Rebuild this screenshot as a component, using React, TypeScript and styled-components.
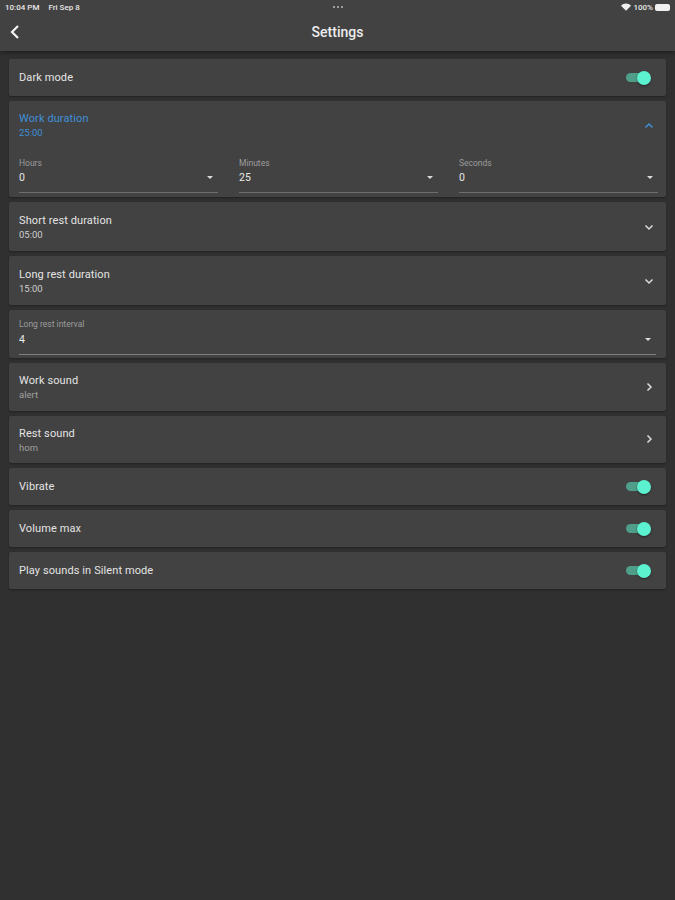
import styled, { createGlobalStyle } from 'styled-components';

const GlobalStyle = createGlobalStyle`
  html, body {
    margin: 0;
    padding: 0;
    background: #303030;
  }
  body {
    font-family: Roboto, "Liberation Sans", sans-serif;
    color: #fff;
  }
  * {
    box-sizing: border-box;
  }
`;

const Chevron = ({ dir, color = '#dcdcdc' }: { dir: 'up' | 'down' | 'right'; color?: string }) => {
  const points = {
    right: '9,5 16,12 9,19',
    up: '5,15 12,8 19,15',
    down: '5,9 12,16 19,9',
  }[dir];
  return (
    <svg width='12' height='12' viewBox='0 0 24 24' fill='none'>
      <polyline points={points} stroke={color} strokeWidth='3' />
    </svg>
  );
};

const Toggle = () => (
  <ToggleTrack>
    <ToggleThumb />
  </ToggleTrack>
);

const Select = ({ label, value, wide }: { label: string; value: string; wide?: boolean }) => (
  <div>
    <SelectLabel>{label}</SelectLabel>
    <SelectRow $wide={wide}>
      <SelectValue>{value}</SelectValue>
      <Caret />
    </SelectRow>
  </div>
);

const App = () => (
  <Page>
    <GlobalStyle />
    <Header>
      <StatusBar>
        <StatusGroup>
          <span>10:04 PM</span>
          <span>Fri Sep 8</span>
        </StatusGroup>
        <Dots>
          <i />
          <i />
          <i />
        </Dots>
        <StatusRight>
          <svg width='10' height='8' viewBox='0 0 22 16'>
            <path d='M11 16 0 5c6-6.500 16-6.500 22 0z' fill='#f0f0f0' />
          </svg>
          <span>100%</span>
          <Battery />
        </StatusRight>
      </StatusBar>
      <NavBar>
        <BackIcon>
          <svg width='14' height='16' viewBox='0 0 14 16' fill='none'>
            <polyline points='10,2 4,8 10,14' stroke='#f4f4f4' strokeWidth='2.2' />
          </svg>
        </BackIcon>
        <Title>Settings</Title>
      </NavBar>
    </Header>

    <List>
      <SwitchCard>
        <RowTitle>Dark mode</RowTitle>
        <Toggle />
      </SwitchCard>

      <ExpandedCard>
        <ExpandedHead>
          <div>
            <RowTitle $accent>Work duration</RowTitle>
            <RowSub $accent>25:00</RowSub>
          </div>
          <Chevron dir='up' color='#3f8fd8' />
        </ExpandedHead>
        <SelectGrid>
          <Select label='Hours' value='0' />
          <Select label='Minutes' value='25' />
          <Select label='Seconds' value='0' />
        </SelectGrid>
      </ExpandedCard>

      <TallCard>
        <TextBlock>
          <RowTitle>Short rest duration</RowTitle>
          <RowSub>05:00</RowSub>
        </TextBlock>
        <Chevron dir='down' />
      </TallCard>

      <TallCard>
        <TextBlock>
          <RowTitle>Long rest duration</RowTitle>
          <RowSub>15:00</RowSub>
        </TextBlock>
        <Chevron dir='down' />
      </TallCard>

      <IntervalCard>
        <Select label='Long rest interval' value='4' wide />
      </IntervalCard>

      <SoundCard>
        <TextBlock>
          <RowTitle>Work sound</RowTitle>
          <RowSub $muted>alert</RowSub>
        </TextBlock>
        <Chevron dir='right' />
      </SoundCard>

      <SoundCard>
        <TextBlock>
          <RowTitle>Rest sound</RowTitle>
          <RowSub $muted>horn</RowSub>
        </TextBlock>
        <Chevron dir='right' />
      </SoundCard>

      <SwitchCard>
        <RowTitle>Vibrate</RowTitle>
        <Toggle />
      </SwitchCard>
      <SwitchCard>
        <RowTitle>Volume max</RowTitle>
        <Toggle />
      </SwitchCard>
      <SwitchCard>
        <RowTitle>Play sounds in Silent mode</RowTitle>
        <Toggle />
      </SwitchCard>
    </List>
  </Page>
);

const Page = styled.div`
  width: 675px;
  min-height: 900px;
  background: #303030;
`;

const Header = styled.header`
  height: 51px;
  background: #424242;
  box-shadow: 0 2px 4px rgba(0, 0, 0, 0.35);
`;

const StatusBar = styled.div`
  height: 14px;
  padding: 0 5px;
  display: grid;
  grid-template-columns: 1fr auto 1fr;
  align-items: center;
  font-size: 8px;
  font-weight: 500;
  color: #e8e8e8;
`;

const StatusGroup = styled.div`
  display: flex;
  gap: 9px;
`;

const Dots = styled.div`
  display: flex;
  gap: 2px;

  i {
    width: 2px;
    height: 2px;
    border-radius: 50%;
    background: #bdbdbd;
  }
`;

const StatusRight = styled.div`
  display: flex;
  justify-content: flex-end;
  align-items: center;
  gap: 2px;
`;

const Battery = styled.div`
  width: 15px;
  height: 7px;
  border-radius: 2px;
  background: #f0f0f0;
`;

const NavBar = styled.div`
  height: 36px;
  position: relative;
  display: flex;
  align-items: center;
  justify-content: center;
`;

const BackIcon = styled.div`
  position: absolute;
  left: 8px;
  top: 10px;
  display: flex;
`;

const Title = styled.h1`
  margin: 0;
  font-size: 14px;
  font-weight: 500;
  color: #ececec;
`;

const List = styled.main`
  padding: 8px 9px 0;
  display: flex;
  flex-direction: column;
  gap: 5px;
`;

const Card = styled.section`
  background: #424242;
  border-radius: 2px;
  box-shadow: 0 1px 2px rgba(0, 0, 0, 0.3);
`;

const SwitchCard = styled(Card)`
  height: 37px;
  padding: 0 16px 0 10px;
  display: flex;
  align-items: center;
  justify-content: space-between;
`;

const TallCard = styled(Card)`
  height: 49px;
  padding: 0 11px 0 10px;
  display: flex;
  align-items: center;
  justify-content: space-between;
`;

const SoundCard = styled(TallCard)`
  height: 47.5px;
`;

const TextBlock = styled.div`
  padding-top: 2px;
`;

const ExpandedCard = styled(Card)`
  height: 96px;
  padding: 11px 10px 0;
`;

const ExpandedHead = styled.div`
  display: flex;
  align-items: center;
  justify-content: space-between;
  padding-right: 1px;
`;

const IntervalCard = styled(Card)`
  height: 48px;
  padding: 9px 10px 0;
`;

const RowTitle = styled.div<{ $accent?: boolean }>`
  font-size: 11px;
  line-height: 14px;
  letter-spacing: 0.1px;
  color: ${(p) => (p.$accent ? '#3f8fd8' : '#e4e4e4')};
`;

const RowSub = styled.div<{ $accent?: boolean; $muted?: boolean }>`
  font-size: 9.5px;
  line-height: 13px;
  color: ${(p) => (p.$accent ? '#3f8fd8' : p.$muted ? '#a0a0a0' : '#cfcfcf')};
`;

const SelectGrid = styled.div`
  margin-top: 19px;
  display: grid;
  grid-template-columns: repeat(3, 199px);
  column-gap: 21px;
`;

const SelectLabel = styled.div`
  font-size: 8.5px;
  line-height: 10px;
  color: #9c9c9c;
`;

const SelectRow = styled.div<{ $wide?: boolean }>`
  height: ${(p) => (p.$wide ? '26px' : '25px')};
  display: flex;
  align-items: center;
  justify-content: space-between;
  padding: 0 5px 5px 0;
  border-bottom: 1.5px solid ${(p) => (p.$wide ? '#808080' : '#6e6e6e')};
`;

const SelectValue = styled.span`
  font-size: 10.5px;
  color: #e8e8e8;
`;

const Caret = styled.span`
  width: 0;
  height: 0;
  border-left: 3.5px solid transparent;
  border-right: 3.5px solid transparent;
  border-top: 3px solid #dcdcdc;
`;

const ToggleTrack = styled.div`
  position: relative;
  width: 24px;
  height: 9px;
  border-radius: 5px;
  background: #4f9e8a;
`;

const ToggleThumb = styled.div`
  position: absolute;
  right: -1px;
  top: -2.5px;
  width: 14px;
  height: 14px;
  border-radius: 50%;
  background: #5cf2cf;
  box-shadow: 0 1px 2px rgba(0, 0, 0, 0.5);
`;

export default App;
